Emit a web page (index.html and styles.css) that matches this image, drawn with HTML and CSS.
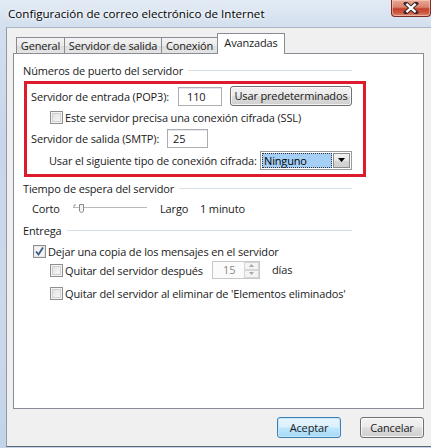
FILE: index.html
```html
<!DOCTYPE html>
<html>
<head>
<meta charset="utf-8">
<link rel="stylesheet" href="styles.css">
</head>
<body>
<div class="window">
  <div class="titlebar">
    <span class="title">Configuración de correo electrónico de Internet</span>
    <div class="close">
      <svg width="16" height="12" viewBox="0 0 16 12">
        <path d="M3 1.5 L13 10.5 M13 1.5 L3 10.5" stroke="#3a2626" stroke-width="4.2" stroke-linecap="square" fill="none"/>
        <path d="M3.4 1.9 L12.6 10.1 M12.6 1.9 L3.4 10.1" stroke="#ffffff" stroke-width="2.2" stroke-linecap="butt" fill="none"/>
      </svg>
    </div>
  </div>
  <div class="client">
    <div class="tabs">
      <div class="tab t1">General</div>
      <div class="tab t2">Servidor de salida</div>
      <div class="tab t3">Conexión</div>
      <div class="tab active">Avanzadas</div>
    </div>
    <div class="panel">
      <div class="group first"><span>Números de puerto del servidor</span><i class="rule"></i></div>
      <div class="mark">
        <div class="row r1">
          <span class="lbl w147">Servidor de entrada (POP3):</span>
          <span class="edit e44">110</span>
          <span class="btn predet">Usar predeterminados</span>
        </div>
        <div class="row r2">
          <span class="chk"></span><span class="ctext">Este servidor precisa una conexión cifrada (SSL)</span>
        </div>
        <div class="row r3">
          <span class="lbl w136">Servidor de salida (SMTP):</span>
          <span class="edit e41">25</span>
        </div>
        <div class="row r4">
          <span class="lbl w211">Usar el siguiente tipo de conexión cifrada:</span>
          <span class="combo"><span class="sel">Ninguno</span><span class="drop"><svg width="7" height="4" viewBox="0 0 7 4"><path d="M0 0 H7 L3.5 4 Z" fill="#000"/></svg></span></span>
        </div>
      </div>
      <div class="group g2"><span>Tiempo de espera del servidor</span><i class="rule"></i></div>
      <div class="row slide">
        <span class="corto">Corto</span>
        <svg class="slider" width="74" height="12" viewBox="0 0 74 12">
          <rect x="0" y="4" width="74" height="1" fill="#b9b9b9"/>
          <rect x="0" y="5" width="74" height="1" fill="#ffffff"/>
          <path d="M1 2 V5 M1 2 H3" stroke="#a0a0a0" stroke-width="1" fill="none"/>
          <path d="M6.5 1.5 H10.5 V8 L8.5 10 L6.5 8 Z" fill="#f4f4f4" stroke="#8a8a8a" stroke-width="1"/>
        </svg>
        <span class="largo">Largo</span>
        <span>1 minuto</span>
      </div>
      <div class="group g3"><span>Entrega</span><i class="rule"></i></div>
      <div class="row c1">
        <span class="chk checked"><svg width="11" height="11" viewBox="0 0 11 11"><path d="M2 5.5 L4.5 8.5 L9 1.5" stroke="#3b5a8e" stroke-width="1.8" fill="none"/></svg></span><span class="ctext">Dejar una copia de los mensajes en el servidor</span>
      </div>
      <div class="row c2">
        <span class="chk"></span><span class="ctext w145">Quitar del servidor después</span>
        <span class="spin"><span class="sval">15</span><span class="sbtns"><span class="sb"><svg width="5" height="3" viewBox="0 0 5 3"><path d="M0 3 L2.5 0 L5 3Z" fill="#a8a8a8"/></svg></span><span class="sb"><svg width="5" height="3" viewBox="0 0 5 3"><path d="M0 0 L2.5 3 L5 0Z" fill="#a8a8a8"/></svg></span></span></span>
        <span class="dias">días</span>
      </div>
      <div class="row c3">
        <span class="chk"></span><span class="ctext">Quitar del servidor al eliminar de 'Elementos eliminados'</span>
      </div>
    </div>
    <div class="footer">
      <span class="btn def">Aceptar</span>
      <span class="btn">Cancelar</span>
    </div>
  </div>
</div>
</body>
</html>
```

FILE: styles.css
```css
* { box-sizing: border-box; }
html, body { margin: 0; padding: 0; }
body {
  width: 431px; height: 448px; overflow: hidden;
  font-family: "Segoe UI", "Open Sans", sans-serif;
  font-size: 11px; letter-spacing: -0.15px; color: #1a1a1a;
  background: #c9d8ea;
}
.window {
  width: 431px; height: 448px;
  background: linear-gradient(180deg, #e3ebf5 0, #d3dfee 27px, #c7d6ea 140px, #cbd9ea 300px, #c4d4e8 100%);
  padding: 0 0 1px 6px;
  display: flex; flex-direction: column;
}
.titlebar {
  height: 27px; flex: none;
  display: flex; align-items: center;
  padding: 0 0 1px 2px;
  position: relative;
}
.title { font-size: 11.6px; letter-spacing: 0; color: #000; text-shadow: 0 0 6px #fff, 0 0 3px #fff; }
.close {
  position: absolute; right: 0; top: 0;
  width: 40px; height: 17px;
  border: 1px solid #7a2c24; border-top: none;
  border-radius: 0 0 4px 4px;
  background: linear-gradient(180deg, #e9a795 0, #d9826f 45%, #c3412c 55%, #cd5a44 80%, #e08a6e 100%);
  display: flex; align-items: center; justify-content: center;
  box-shadow: inset 0 0 0 1px rgba(255,220,210,0.5);
}
.client {
  flex: 1;
  background: #f0f0f0;
  border-left: 1px solid #8e9aa7;
  border-top: 1px solid #a9b6c4;
  border-bottom: 1px solid #5f6870;
  padding: 5px 0 0 6px;
  display: flex; flex-direction: column;
}
.tabs {
  display: flex; align-items: flex-end;
  height: 20px; margin-left: 3px;
  position: relative; z-index: 2;
}
.tab {
  height: 16px;
  border: 1px solid #898c95; border-bottom: none;
  background: linear-gradient(180deg, #f3f3f3 0, #ebebeb 50%, #dcdcdc 51%, #e4e4e4 100%);
  display: flex; align-items: center; justify-content: center;
  margin-right: -1px;
  padding-bottom: 1px;
}
.t1 { width: 49px; }
.t2 { width: 98px; }
.t3 { width: 57px; }
.tab.active {
  width: 68px; height: 21px; margin-bottom: -1px;
  background: #fff; padding-bottom: 4px;
  margin-left: 0;
}
.panel {
  width: 411px; height: 356px;
  background: #fff;
  border: 1px solid #898c95;
  padding: 6px 0 0 9px;
  position: relative; z-index: 1;
  flex: none;
}
.group {
  width: 329px; height: 20px;
  display: flex; align-items: center;
}
.group .rule {
  flex: 1; height: 2px; margin-left: 5px; margin-top: 1px;
  border-top: 1px solid #d5dfe5; border-bottom: 1px solid #fff;
}
.group.first { margin-bottom: 1px; }
.g2 { margin-top: 1px; }
.g3 { margin-top: 2px; }
.mark {
  width: 342px; margin-left: 1px;
  border: 3px solid #dc1c2c;
  padding: 2px 0 3px 4px;
}
.row { display: flex; align-items: center; }
.r1 { height: 20px; }
.r2 { height: 22px; padding-left: 19px; }
.r3 { height: 21px; }
.r4 { height: 22px; padding-left: 18px; }
.lbl { flex: none; white-space: nowrap; }
.w147 { width: 147px; }
.w136 { width: 136px; }
.w211 { width: 211px; }
.edit {
  height: 19px; border: 1px solid #abadb3; border-top-color: #abadb3;
  background: #fff; display: flex; align-items: center;
  box-shadow: inset 0 1px 0 #e3e9ef;
}
.e44 { width: 44px; padding-left: 8px; }
.e41 { width: 41px; padding-left: 5px; }
.btn {
  height: 21px; width: 64px;
  border: 1px solid #707070; border-radius: 3px;
  background: linear-gradient(180deg, #f2f2f2 0, #ebebeb 48%, #dddddd 52%, #cfcfcf 100%);
  box-shadow: inset 0 0 0 1px rgba(255,255,255,0.75);
  display: inline-flex; align-items: center; justify-content: center;
  padding-bottom: 1px;
}
.predet { width: 122px; height: 20px; margin-left: 8px; }
.chk {
  width: 13px; height: 13px; flex: none;
  border: 1px solid #8f8f8f;
  background: linear-gradient(135deg, #dcdcdc 0, #f0f0f0 60%, #fbfbfb 100%);
  box-shadow: inset 0 0 0 1px #f4f4f4, inset 0 0 0 2px #d0d0d0;
  display: inline-flex; align-items: center; justify-content: center;
}
.chk.checked { background: #f4f4f4; box-shadow: inset 0 0 0 1px #e6e6e6; }
.ctext { margin-left: 2px; white-space: nowrap; }
.w145 { width: 147px; flex: none; }
.combo {
  width: 92px; height: 19px;
  border: 1px solid #9a9a9a;
  background: #fff;
  display: flex; align-items: stretch;
  padding: 1px;
}
.sel {
  flex: 1;
  background: #a6cff6;
  outline: 1px dotted #333; outline-offset: -1px;
  display: flex; align-items: center; padding-left: 2px;
  color: #000;
}
.drop {
  width: 17px; margin-left: 1px;
  border: 1px solid #8c8c8c;
  background: linear-gradient(180deg, #f2f2f2 0, #e6e6e6 50%, #d6d6d6 51%, #d0d0d0 100%);
  display: flex; align-items: center; justify-content: center;
}
.slide { height: 20px; padding-left: 9px; }
.corto { width: 41px; flex: none; }
.slider { flex: none; margin-top: 1px; }
.largo { margin-left: 13px; width: 40px; flex: none; }
.c1 { height: 19px; margin-top: 2px; padding-left: 10px; }
.c2 { height: 19px; padding-left: 27px; }
.c3 { height: 20px; margin-top: 3px; padding-left: 27px; }
.spin {
  width: 48px; height: 18px; flex: none;
  border: 1px solid #c4c8cc;
  background: #fbfbfb;
  display: flex; align-items: stretch;
  margin-top: -2px;
}
.sval { flex: 1; color: #8a8a8a; padding-left: 10px; display: flex; align-items: center; }
.sbtns { width: 15px; display: flex; flex-direction: column; }
.sb {
  flex: 1; border: 1px solid #d4d6d8; background: #f3f3f3;
  display: flex; align-items: center; justify-content: center;
}
.dias { margin-left: 12px; margin-top: -2px; }
.footer {
  display: flex; gap: 19px;
  margin-top: 8px;
  padding-left: 264px;
}
.btn.def {
  border-color: #3c7fb1;
  background: linear-gradient(180deg, #eaf6fd 0, #d9f0fc 48%, #bee6fd 52%, #a7d9f5 100%);
  box-shadow: inset 0 0 0 1px #c4e7fb;
}
```
